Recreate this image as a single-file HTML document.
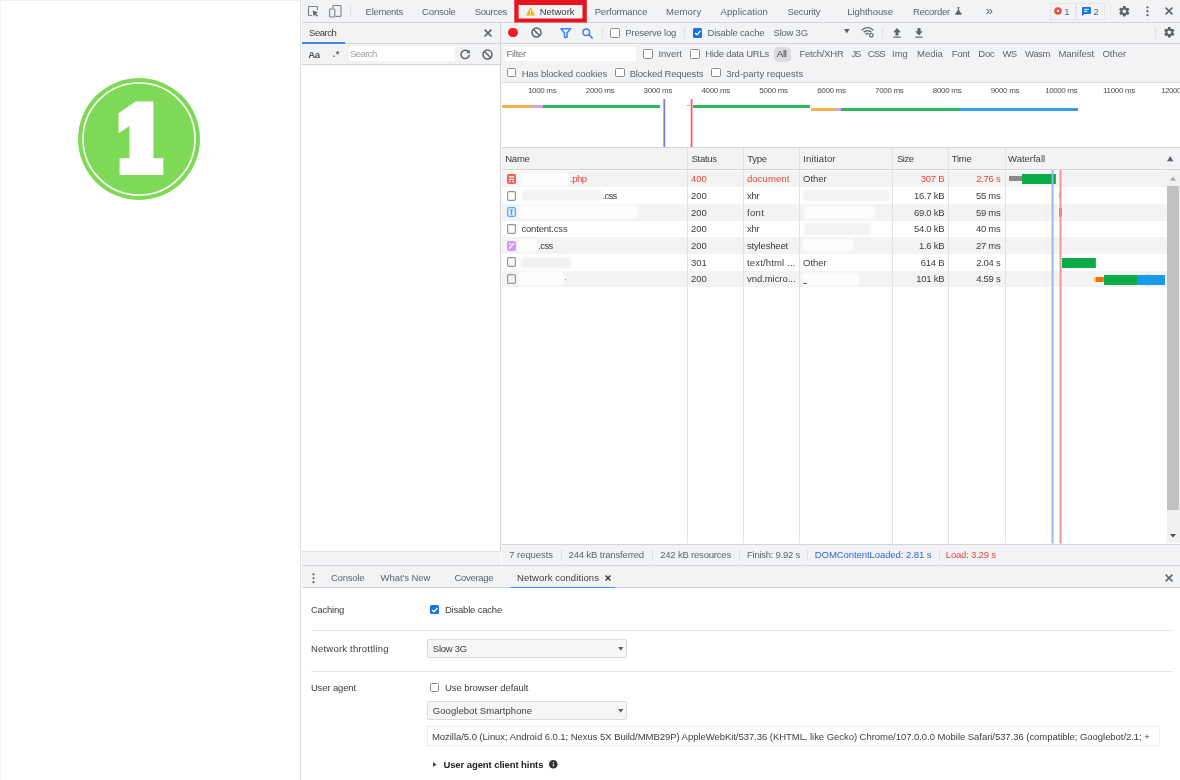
<!DOCTYPE html>
<html lang="en"><head><meta charset="utf-8"><title>DevTools Network conditions</title>
<style>
html,body{margin:0;padding:0;}
body{width:1180px;height:780px;overflow:hidden;background:#fff;position:relative;font-family:"Liberation Sans",sans-serif;font-size:9.5px;color:#333;}
.t{position:absolute;white-space:pre;line-height:14px;height:14px;}
.cb{position:absolute;width:7.5px;height:7.5px;border:1px solid #8c8c8c;border-radius:1.5px;background:#fff;}
.cbc{position:absolute;width:9.5px;height:9.5px;border-radius:1.5px;background:#1a73e8;}
svg{position:absolute;overflow:visible;}
#app{position:absolute;left:0;top:0;width:1180px;height:780px;will-change:transform;}
</style></head><body>
<div id="app">
<svg style="left:70px;top:70px" width="140" height="140" viewBox="70 70 140 140">
<circle cx="139" cy="139" r="61" fill="#7ed957"/>
<circle cx="139" cy="139" r="56" fill="none" stroke="#fff" stroke-width="1.6"/>
<text x="140" y="169.4" text-anchor="middle" font-family="'DejaVu Serif','Liberation Serif',serif" font-weight="bold" font-size="82" fill="#fff" stroke="#fff" stroke-width="12" stroke-linejoin="miter" transform="translate(140 0) scale(0.88 1) translate(-140 0)">1</text>
</svg>
<div style="position:absolute;left:0px;top:0px;width:300px;height:1px;background:#efeff2;"></div>
<div style="position:absolute;left:0px;top:0px;width:1px;height:780px;background:#f4f4f6;"></div>
<div style="position:absolute;left:300.3px;top:0px;width:1.2px;height:780px;background:#dcdee0;"></div>
<div style="position:absolute;left:301.5px;top:0px;width:878.5px;height:21.5px;background:#f1f3f4;"></div>
<div style="position:absolute;left:301.5px;top:21.5px;width:878.5px;height:1px;background:#d3d5d8;"></div>
<div style="position:absolute;left:301.5px;top:22.5px;width:878.5px;height:20.5px;background:#f1f3f4;"></div>
<div style="position:absolute;left:301.5px;top:43px;width:878.5px;height:1px;background:#d3d5d8;"></div>
<div style="position:absolute;left:301.5px;top:44px;width:199.5px;height:20.3px;background:#f1f3f4;"></div>
<div style="position:absolute;left:501px;top:44px;width:679px;height:21px;background:#f1f3f4;"></div>
<div style="position:absolute;left:301.5px;top:64.3px;width:199.5px;height:1px;background:#d3d5d8;"></div>
<div style="position:absolute;left:501.5px;top:65px;width:678.5px;height:17.5px;background:#f1f3f4;"></div>
<div style="position:absolute;left:501.5px;top:82px;width:678.5px;height:1px;background:#dddee1;"></div>
<div style="position:absolute;left:500.2px;top:22.5px;width:1.3px;height:543px;background:#cfd1d4;"></div>
<svg style="left:308px;top:6px" width="11" height="11" viewBox="0 0 11 11"><path d="M9.5 4V1.2a.7.7 0 0 0-.7-.7H1.2a.7.7 0 0 0-.7.7v7.6c0 .4.3.7.7.7H4" fill="none" stroke="#7d8288" stroke-width="1.1"/><path d="M4.6 4.4l5.6 2.2-2.4.9 2.1 2.3-1 .9-2.100-2.300-1.100 2.300z" fill="#5f6368"/></svg>
<svg style="left:329px;top:5px" width="13" height="13" viewBox="0 0 13 13"><path d="M4 3V1.300a.8.800 0 0 1 .8-.8h6.400a.8.800 0 0 1 .8.800V11" fill="none" stroke="#7d8288" stroke-width="1.1"/><rect x="0.600" y="4" width="5.200" height="8" rx=".8" fill="none" stroke="#7d8288" stroke-width="1.1"/><path d="M6.500 11.400H12" stroke="#7d8288" stroke-width="1.1"/></svg>
<div style="position:absolute;left:350.3px;top:5px;width:1px;height:12px;background:#dfe0e3;"></div>
<span class="t" style="left:365.60px;top:4.70px;font-size:9.5px;letter-spacing:-0.289px;color:#60646a;">Elements</span>
<span class="t" style="left:422.10px;top:4.70px;font-size:9.5px;letter-spacing:-0.180px;color:#60646a;">Console</span>
<span class="t" style="left:474.70px;top:4.70px;font-size:9.5px;letter-spacing:-0.366px;color:#60646a;">Sources</span>
<svg style="left:0;top:0" width="1180" height="30"><path fill-rule="evenodd" fill="#e8131f" d="M514.300 -1H586.800V22.600H514.300zM518.600 4.900V18.500H582.500V4.900z"/></svg>
<svg style="left:526px;top:6.800px" width="9" height="8.500" viewBox="0 0 9 8.500"><path d="M4.500 0L9 8.500H0z" fill="#f4b400"/><rect x="4" y="3" width="1" height="3" fill="#fff"/><rect x="4" y="6.700" width="1" height="1" fill="#fff"/></svg>
<span class="t" style="left:539.70px;top:4.70px;font-size:9.5px;letter-spacing:0.008px;color:#3c3c3c;">Network</span>
<span class="t" style="left:594.70px;top:4.70px;font-size:9.5px;letter-spacing:-0.163px;color:#60646a;">Performance</span>
<span class="t" style="left:666.00px;top:4.70px;font-size:9.5px;letter-spacing:0.165px;color:#60646a;">Memory</span>
<span class="t" style="left:720.50px;top:4.70px;font-size:9.5px;letter-spacing:0.092px;color:#60646a;">Application</span>
<span class="t" style="left:787.60px;top:4.70px;font-size:9.5px;letter-spacing:-0.216px;color:#60646a;">Security</span>
<span class="t" style="left:847.30px;top:4.70px;font-size:9.5px;letter-spacing:-0.078px;color:#60646a;">Lighthouse</span>
<span class="t" style="left:913.00px;top:4.70px;font-size:9.5px;letter-spacing:-0.285px;color:#60646a;">Recorder</span>
<svg style="left:954.800px;top:7px" width="6.900" height="7.700" viewBox="0 0 8 7.500" preserveAspectRatio="none"><path d="M2.800 0h2.400v.8h-.5v2.400L7.600 6.700a.5.500 0 0 1-.4.800H.800a.5.500 0 0 1-.4-.8L3.300 3.200V.800h-.5z" fill="#5f6368"/></svg>
<span class="t" style="left:985.80px;top:3.60px;font-size:13px;letter-spacing:-0.034px;color:#60646a;">»</span>
<div style="position:absolute;left:1049.700px;top:3px;width:26.400px;height:16.500px;border:1px dotted #d6d8db;box-sizing:border-box;"></div>
<div style="position:absolute;left:1075.600px;top:3px;width:29.400px;height:16.500px;border:1px dotted #d6d8db;box-sizing:border-box;"></div>
<svg style="left:1053.800px;top:7px" width="8" height="8" viewBox="0 0 8 8"><circle cx="4" cy="4" r="3.800" fill="#e7514a"/><path d="M3 3l2 2M5 3L3 5" stroke="#fff" stroke-width="1"/></svg>
<span class="t" style="left:1064.20px;top:4.70px;font-size:9.5px;letter-spacing:-1.297px;color:#60646a;">1</span>
<svg style="left:1081.500px;top:6.800px" width="9" height="9" viewBox="0 0 9 9"><path d="M.8 0h7.400a.8.800 0 0 1 .8.800v5.400a.8.800 0 0 1-.8.800H2.500L0 9V.800A.8.800 0 0 1 .8 0z" fill="#1a73e8"/><path d="M2 2.300h5M2 4.300h3.500" stroke="#fff" stroke-width=".9"/></svg>
<span class="t" style="left:1093.60px;top:4.70px;font-size:9.5px;letter-spacing:-0.497px;color:#60646a;">2</span>
<div style="position:absolute;left:1110px;top:5px;width:1px;height:12px;background:#eaebed;"></div>
<svg style="left:1118.2px;top:4.7px" width="12.600" height="12.600" viewBox="0 0 24 24"><path d="M19.430 12.980c.040-.320.070-.640.070-.980s-.030-.660-.070-.980l2.110-1.650c.190-.150.240-.420.120-.640l-2-3.460c-.120-.220-.390-.300-.610-.220l-2.490 1c-.520-.400-1.080-.730-1.690-.980l-.380-2.650C14.460 2.180 14.250 2 14 2h-4c-.250 0-.460.180-.490.420l-.380 2.650c-.610.250-1.170.590-1.690.980l-2.490-1c-.230-.090-.490 0-.610.220l-2 3.460c-.130.220-.070.490.120.640l2.110 1.650c-.040.320-.070.650-.070.980s.030.660.070.980l-2.110 1.650c-.190.150-.240.420-.120.640l2 3.460c.120.220.390.300.610.220l2.490-1c.520.400 1.080.730 1.690.980l.380 2.650c.030.240.240.420.490.420h4c.250 0 .460-.180.490-.420l.380-2.650c.610-.250 1.170-.590 1.690-.980l2.490 1c.230.090.490 0 .610-.220l2-3.460c.120-.220.070-.490-.120-.640l-2.110-1.650zM12 15.500c-1.930 0-3.500-1.570-3.500-3.500s1.570-3.500 3.500-3.500 3.500 1.570 3.500 3.500-1.570 3.500-3.500 3.500z" fill="#5f6368"/></svg>
<svg style="left:1145.800px;top:6.200px" width="3" height="10.500" viewBox="0 0 3 10.500"><circle cx="1.500" cy="1.300" r="1.150" fill="#5f6368"/><circle cx="1.500" cy="5.250" r="1.150" fill="#5f6368"/><circle cx="1.500" cy="9.200" r="1.150" fill="#5f6368"/></svg>
<svg style="left:1164.8px;top:7.2px" width="8" height="8" viewBox="0 0 8 8"><path d="M.6.600l6.800 6.800M7.400.600L.600 7.400" stroke="#5f6368" stroke-width="1.500"/></svg>
<span class="t" style="left:309.00px;top:26.00px;font-size:9.5px;letter-spacing:-0.452px;color:#3c3c3c;">Search</span>
<div style="position:absolute;left:301.5px;top:42px;width:43.5px;height:1.8px;background:#4a86e8;"></div>
<svg style="left:483.5px;top:29.2px" width="8" height="8" viewBox="0 0 8 8"><path d="M.6.600l6.800 6.800M7.400.600L.600 7.400" stroke="#5f6368" stroke-width="1.500"/></svg>
<div style="position:absolute;left:507.900px;top:27.600px;width:9.800px;height:9.800px;border-radius:50%;background:#ee1c25;"></div>
<svg style="left:530.6px;top:27.1px" width="11" height="11" viewBox="0 0 11 11"><circle cx="5.500" cy="5.500" r="4.500" fill="none" stroke="#5f6368" stroke-width="1.500"/><path d="M2.300 2.300l6.400 6.400" stroke="#5f6368" stroke-width="1.500"/></svg>
<svg style="left:559.500px;top:28.100px" width="11.500" height="10" viewBox="0 0 11.500 10"><path d="M.9.800h9.700L7 5v4.200H4.500V5z" fill="none" stroke="#3b82f0" stroke-width="1.500" stroke-linejoin="round"/></svg>
<svg style="left:581.500px;top:28.100px" width="11.500" height="11" viewBox="0 0 11.500 11"><circle cx="4.300" cy="4.300" r="3.300" fill="none" stroke="#3b82f0" stroke-width="1.500"/><path d="M6.700 6.700l4 3.800" stroke="#3b82f0" stroke-width="1.700"/></svg>
<div style="position:absolute;left:602.3px;top:27px;width:1px;height:12px;background:#dfe0e3;"></div>
<div class="cb" style="left:610.25px;top:28.25px"></div>
<span class="t" style="left:625.30px;top:26.00px;font-size:9.5px;letter-spacing:-0.204px;color:#60646a;">Preserve log</span>
<div style="position:absolute;left:684px;top:27px;width:1px;height:12px;background:#dfe0e3;"></div>
<div class="cbc" style="left:692.55px;top:28.25px"></div>
<svg style="left:692.55px;top:28.25px" width="9.500" height="9.500" viewBox="0 0 9.500 9.500"><path d="M2.100 4.900l1.900 1.900 3.500-3.900" fill="none" stroke="#fff" stroke-width="1.400"/></svg>
<span class="t" style="left:707.50px;top:26.00px;font-size:9.5px;letter-spacing:-0.221px;color:#60646a;">Disable cache</span>
<span class="t" style="left:773.60px;top:26.00px;font-size:9.5px;letter-spacing:-0.244px;color:#60646a;">Slow 3G</span>
<svg style="left:844px;top:29.200px" width="5.600" height="4.500" viewBox="0 0 5 4.500" preserveAspectRatio="none"><path d="M0 0h5L2.500 4.500z" fill="#5f6368"/></svg>
<svg style="left:861px;top:26.700px" width="13.500" height="10.500" viewBox="0 0 13.500 10.500"><path d="M.7 3.200a8 8 0 0 1 11.600 0M2.600 5.300a5.300 5.300 0 0 1 7.800 0M4.500 7.300a2.700 2.700 0 0 1 3 -.5" fill="none" stroke="#5f6368" stroke-width="1.300"/><circle cx="10.300" cy="8.300" r="1.800" fill="none" stroke="#5f6368" stroke-width="1.200"/></svg>
<div style="position:absolute;left:881.5px;top:27px;width:1px;height:12px;background:#dfe0e3;"></div>
<svg style="left:892.800px;top:27.600px" width="8" height="9.800" viewBox="0 0 8 10.500" preserveAspectRatio="none"><path d="M4 0L7.800 4.500H5.500V8H2.500V4.500H.2z" fill="#5f6368"/><rect x=".2" y="9.200" width="7.600" height="1.200" fill="#5f6368"/></svg>
<svg style="left:914.800px;top:27.600px" width="8" height="9.800" viewBox="0 0 8 10.500" preserveAspectRatio="none"><path d="M4 8L7.800 3.500H5.500V0H2.500V3.500H.2z" fill="#5f6368"/><rect x=".2" y="9.200" width="7.600" height="1.200" fill="#5f6368"/></svg>
<div style="position:absolute;left:1155px;top:27px;width:1px;height:12px;background:#dfe0e3;"></div>
<svg style="left:1162.5px;top:26.4px" width="12.600" height="12.600" viewBox="0 0 24 24"><path d="M19.430 12.980c.040-.320.070-.640.070-.980s-.030-.660-.070-.980l2.110-1.650c.190-.150.240-.420.120-.640l-2-3.460c-.120-.220-.390-.300-.610-.220l-2.490 1c-.520-.400-1.080-.730-1.690-.980l-.380-2.650C14.460 2.180 14.250 2 14 2h-4c-.250 0-.460.180-.490.420l-.380 2.650c-.610.250-1.170.590-1.690.980l-2.490-1c-.230-.090-.490 0-.610.220l-2 3.460c-.130.220-.070.490.120.640l2.110 1.650c-.040.320-.070.650-.070.980s.030.660.070.980l-2.110 1.650c-.190.150-.240.420-.120.640l2 3.460c.120.220.390.300.610.220l2.490-1c.520.400 1.080.730 1.690.980l.380 2.650c.030.240.240.420.490.420h4c.250 0 .460-.180.490-.420l.380-2.650c.610-.250 1.170-.590 1.690-.980l2.490 1c.230.090.490 0 .610-.220l2-3.460c.120-.220.070-.490-.120-.640l-2.110-1.650zM12 15.500c-1.930 0-3.500-1.570-3.500-3.500s1.570-3.500 3.500-3.500 3.500 1.570 3.500 3.500-1.570 3.500-3.500 3.500z" fill="#5f6368"/></svg>
<span class="t" style="left:308.20px;top:48.00px;font-size:9.5px;letter-spacing:-0.278px;color:#4a4d51;font-weight:700;">Aa</span>
<span class="t" style="left:332.60px;top:47.00px;font-size:9.5px;letter-spacing:0.528px;color:#5f6368;font-weight:700;">.*</span>
<div style="position:absolute;left:348.8px;top:46.1px;width:106.3px;height:15px;background:#fff;"></div>
<span class="t" style="left:350.00px;top:47.30px;font-size:9.5px;letter-spacing:-0.552px;color:#9aa0a6;">Search</span>
<svg style="left:459.800px;top:49px" width="10.500" height="10.500" viewBox="0 0 10.500 10.500"><path d="M8.700 3A4.200 4.200 0 1 0 9.400 5.800" fill="none" stroke="#5f6368" stroke-width="1.500"/><path d="M9.800.800V4.200H6.400z" fill="#5f6368"/></svg>
<svg style="left:482.2px;top:48.7px" width="11" height="11" viewBox="0 0 11 11"><circle cx="5.500" cy="5.500" r="4.500" fill="none" stroke="#5f6368" stroke-width="1.500"/><path d="M2.300 2.300l6.400 6.400" stroke="#5f6368" stroke-width="1.500"/></svg>
<div style="position:absolute;left:505px;top:46.5px;width:130.5px;height:14.5px;background:#fff;"></div>
<span class="t" style="left:506.50px;top:47.30px;font-size:9.5px;letter-spacing:-0.271px;color:#70757a;">Filter</span>
<div class="cb" style="left:643.45px;top:49.25px"></div>
<span class="t" style="left:658.50px;top:47.30px;font-size:9.5px;letter-spacing:-0.078px;color:#60646a;">Invert</span>
<div class="cb" style="left:690.45px;top:49.25px"></div>
<span class="t" style="left:705.20px;top:47.30px;font-size:9.5px;letter-spacing:-0.233px;color:#60646a;">Hide data URLs</span>
<div style="position:absolute;left:774px;top:46.600px;width:17.300px;height:15px;border-radius:5px;background:#dadce0;"></div>
<span class="t" style="left:776.80px;top:47.30px;font-size:9.5px;letter-spacing:-0.221px;color:#3c3c3c;">All</span>
<span class="t" style="left:799.40px;top:47.30px;font-size:9.5px;letter-spacing:-0.263px;color:#60646a;">Fetch/XHR</span>
<span class="t" style="left:851.40px;top:47.30px;font-size:9.5px;letter-spacing:-1.247px;color:#60646a;">JS</span>
<span class="t" style="left:867.80px;top:47.30px;font-size:9.5px;letter-spacing:-0.916px;color:#60646a;">CSS</span>
<span class="t" style="left:892.00px;top:47.30px;font-size:9.5px;letter-spacing:0.019px;color:#60646a;">Img</span>
<span class="t" style="left:917.00px;top:47.30px;font-size:9.5px;letter-spacing:-0.035px;color:#60646a;">Media</span>
<span class="t" style="left:951.70px;top:47.30px;font-size:9.5px;letter-spacing:-0.304px;color:#60646a;">Font</span>
<span class="t" style="left:978.30px;top:47.30px;font-size:9.5px;letter-spacing:-0.269px;color:#60646a;">Doc</span>
<span class="t" style="left:1002.50px;top:47.30px;font-size:9.5px;letter-spacing:-0.756px;color:#60646a;">WS</span>
<span class="t" style="left:1025.00px;top:47.30px;font-size:9.5px;letter-spacing:-0.391px;color:#60646a;">Wasm</span>
<span class="t" style="left:1058.50px;top:47.30px;font-size:9.5px;letter-spacing:-0.051px;color:#60646a;">Manifest</span>
<span class="t" style="left:1102.40px;top:47.30px;font-size:9.5px;letter-spacing:0.007px;color:#60646a;">Other</span>
<div class="cb" style="left:506.75px;top:67.95px"></div>
<span class="t" style="left:521.80px;top:66.60px;font-size:9.5px;letter-spacing:-0.092px;color:#60646a;">Has blocked cookies</span>
<div class="cb" style="left:615.45px;top:67.95px"></div>
<span class="t" style="left:629.70px;top:66.60px;font-size:9.5px;letter-spacing:-0.192px;color:#60646a;">Blocked Requests</span>
<div class="cb" style="left:711.45px;top:67.95px"></div>
<span class="t" style="left:726.20px;top:66.60px;font-size:9.5px;letter-spacing:-0.005px;color:#60646a;">3rd-party requests</span>
<span class="t" style="left:527.90px;top:84.00px;font-size:8.0px;letter-spacing:-0.312px;color:#4a4d50;">1000 ms</span>
<span class="t" style="left:585.75px;top:84.00px;font-size:8.0px;letter-spacing:-0.312px;color:#4a4d50;">2000 ms</span>
<span class="t" style="left:643.60px;top:84.00px;font-size:8.0px;letter-spacing:-0.312px;color:#4a4d50;">3000 ms</span>
<span class="t" style="left:701.45px;top:84.00px;font-size:8.0px;letter-spacing:-0.312px;color:#4a4d50;">4000 ms</span>
<span class="t" style="left:759.30px;top:84.00px;font-size:8.0px;letter-spacing:-0.312px;color:#4a4d50;">5000 ms</span>
<span class="t" style="left:817.15px;top:84.00px;font-size:8.0px;letter-spacing:-0.312px;color:#4a4d50;">6000 ms</span>
<span class="t" style="left:875.00px;top:84.00px;font-size:8.0px;letter-spacing:-0.312px;color:#4a4d50;">7000 ms</span>
<span class="t" style="left:932.85px;top:84.00px;font-size:8.0px;letter-spacing:-0.312px;color:#4a4d50;">8000 ms</span>
<span class="t" style="left:990.70px;top:84.00px;font-size:8.0px;letter-spacing:-0.312px;color:#4a4d50;">9000 ms</span>
<span class="t" style="left:1045.25px;top:84.00px;font-size:8.0px;letter-spacing:-0.418px;color:#4a4d50;">10000 ms</span>
<span class="t" style="left:1103.10px;top:84.00px;font-size:8.0px;letter-spacing:-0.343px;color:#4a4d50;">11000 ms</span>
<span class="t" style="left:1160.95px;top:84.00px;font-size:8.0px;letter-spacing:-0.418px;color:#4a4d50;">12000 ms</span>
<div style="position:absolute;left:501.5px;top:105.4px;width:29px;height:2.8px;background:#f2b14a;"></div>
<div style="position:absolute;left:530.5px;top:105.4px;width:12.8px;height:2.8px;background:#d7a0e8;"></div>
<div style="position:absolute;left:543.3px;top:105.4px;width:116.7px;height:2.8px;background:#2fb55d;"></div>
<svg style="left:0;top:0" width="1180" height="780"><rect x="663.4" y="99" width="1.8" height="48.4" fill="#7b7fd8" opacity="1"/></svg>
<svg style="left:0;top:0" width="1180" height="780"><rect x="690.7" y="99" width="1.8" height="48.4" fill="#e6666a" opacity="1"/></svg>
<div style="position:absolute;left:687px;top:105px;width:3px;height:1px;background:#c9a6a6;"></div>
<div style="position:absolute;left:692.5px;top:105.4px;width:117.5px;height:2.8px;background:#2fb55d;"></div>
<div style="position:absolute;left:810.5px;top:108.2px;width:24.5px;height:2.6px;background:#f2b14a;"></div>
<div style="position:absolute;left:835px;top:108.2px;width:6px;height:2.6px;background:#d7a0e8;"></div>
<div style="position:absolute;left:841px;top:108.2px;width:119px;height:2.6px;background:#2fb55d;"></div>
<div style="position:absolute;left:960px;top:108.2px;width:117.5px;height:2.6px;background:#3a9be8;"></div>
<svg style="left:0;top:0" width="1180" height="780"><rect x="501.5" y="147.1" width="678.5" height="1.5" fill="#d0d2d5" opacity="1"/></svg>
<div style="position:absolute;left:501.5px;top:148.4px;width:678.5px;height:20.4px;background:#f1f3f4;"></div>
<div style="position:absolute;left:501.5px;top:168.8px;width:678.5px;height:1px;background:#d3d5d8;"></div>
<span class="t" style="left:505.20px;top:152.00px;font-size:9.5px;letter-spacing:-0.211px;color:#3c3c3c;">Name</span>
<span class="t" style="left:691.60px;top:152.00px;font-size:9.5px;letter-spacing:-0.306px;color:#3c3c3c;">Status</span>
<span class="t" style="left:747.30px;top:152.00px;font-size:9.5px;letter-spacing:-0.327px;color:#3c3c3c;">Type</span>
<span class="t" style="left:803.20px;top:152.00px;font-size:9.5px;letter-spacing:0.149px;color:#3c3c3c;">Initiator</span>
<span class="t" style="left:897.00px;top:152.00px;font-size:9.5px;letter-spacing:-0.496px;color:#3c3c3c;">Size</span>
<span class="t" style="left:951.80px;top:152.00px;font-size:9.5px;letter-spacing:-0.266px;color:#3c3c3c;">Time</span>
<span class="t" style="left:1008.10px;top:152.00px;font-size:9.5px;letter-spacing:-0.016px;color:#3c3c3c;">Waterfall</span>
<svg style="left:1166.800px;top:156.400px" width="6.400" height="5.200" viewBox="0 0 6.400 4.500" preserveAspectRatio="none"><path d="M0 4.500h6.400L3.200 0z" fill="#5f6368"/></svg>
<div style="position:absolute;left:501.5px;top:170.5px;width:665px;height:16.7px;background:#f3f3f3;"></div>
<div style="position:absolute;left:501.5px;top:203.9px;width:665px;height:16.7px;background:#f3f3f3;"></div>
<div style="position:absolute;left:501.5px;top:237.3px;width:665px;height:16.7px;background:#f3f3f3;"></div>
<div style="position:absolute;left:501.5px;top:270.7px;width:665px;height:16.7px;background:#f3f3f3;"></div>
<div style="position:absolute;left:687.4px;top:148.4px;width:1px;height:395px;background:#e1e2e4;"></div>
<div style="position:absolute;left:743.3px;top:148.4px;width:1px;height:395px;background:#e1e2e4;"></div>
<div style="position:absolute;left:799.4px;top:148.4px;width:1px;height:395px;background:#e1e2e4;"></div>
<div style="position:absolute;left:892.4px;top:148.4px;width:1px;height:395px;background:#e1e2e4;"></div>
<div style="position:absolute;left:948.1px;top:148.4px;width:1px;height:395px;background:#e1e2e4;"></div>
<div style="position:absolute;left:1004.6px;top:148.4px;width:1px;height:395px;background:#e1e2e4;"></div>
<svg style="left:507px;top:173.80px" width="9" height="10" viewBox="0 0 9 10.400" preserveAspectRatio="none"><rect x=".6" y=".6" width="7.800" height="9.200" rx="1.300" fill="#ea5f58" stroke="#ea5f58" stroke-width="1.200"/><rect x="1.800" y="2.300" width="5.400" height="1.300" fill="#fff"/><rect x="1.800" y="5" width="5.400" height="1.300" fill="#fff"/><rect x="1.800" y="7.400" width="2" height="1.200" fill="#fff"/><rect x="5.200" y="7.400" width="2" height="1.200" fill="#fff"/></svg>
<svg style="left:507px;top:190.50px" width="9" height="10" viewBox="0 0 9 10.400" preserveAspectRatio="none"><rect x=".6" y=".6" width="7.800" height="9.200" rx="1.300" fill="none" stroke="#92979c" stroke-width="1.200"/></svg>
<svg style="left:507px;top:207.20px" width="9" height="10" viewBox="0 0 9 10.400" preserveAspectRatio="none"><rect x=".6" y=".6" width="7.800" height="9.200" rx="1.300" fill="#d9eefc" stroke="#5ab0ee" stroke-width="1.200"/><path d="M3 3.300h3M4.500 3.300v4.200M3.800 7.500h1.500" stroke="#2f9be8" stroke-width="1" fill="none"/></svg>
<svg style="left:507px;top:223.90px" width="9" height="10" viewBox="0 0 9 10.400" preserveAspectRatio="none"><rect x=".6" y=".6" width="7.800" height="9.200" rx="1.300" fill="none" stroke="#92979c" stroke-width="1.200"/></svg>
<svg style="left:507px;top:240.60px" width="9" height="10" viewBox="0 0 9 10.400" preserveAspectRatio="none"><rect x=".6" y=".6" width="7.800" height="9.200" rx="1.300" fill="#cf9af3" stroke="#cf9af3" stroke-width="1.200"/><path d="M2 8L7 2.500" stroke="#fff" stroke-width="1.300"/><path d="M2 3h2.500" stroke="#fff" stroke-width="1"/></svg>
<svg style="left:507px;top:257.30px" width="9" height="10" viewBox="0 0 9 10.400" preserveAspectRatio="none"><rect x=".6" y=".6" width="7.800" height="9.200" rx="1.300" fill="none" stroke="#92979c" stroke-width="1.200"/></svg>
<svg style="left:507px;top:274.00px" width="9" height="10" viewBox="0 0 9 10.400" preserveAspectRatio="none"><rect x=".6" y=".6" width="7.800" height="9.200" rx="1.300" fill="none" stroke="#92979c" stroke-width="1.200"/></svg>
<div style="position:absolute;left:518.6px;top:172.0px;width:50.5px;height:13.7px;background:#fdfdfd;border-radius:3px;filter:blur(0.8px);"></div>
<span class="t" style="left:570.00px;top:172.15px;font-size:9.5px;letter-spacing:-0.450px;color:#e8453c;">.php</span>
<div style="position:absolute;left:522px;top:189.7px;width:79.5px;height:11.7px;background:#f2f2f2;border-radius:3px;filter:blur(0.8px);"></div>
<span class="t" style="left:602.50px;top:188.85px;font-size:9.5px;letter-spacing:-0.723px;color:#3c3c3c;">.css</span>
<div style="position:absolute;left:518.6px;top:205.4px;width:119.5px;height:13.7px;background:#fdfdfd;border-radius:3px;filter:blur(0.8px);"></div>
<span class="t" style="left:521.40px;top:222.25px;font-size:9.5px;letter-spacing:-0.178px;color:#3c3c3c;">content.css</span>
<div style="position:absolute;left:518.6px;top:238.8px;width:18.7px;height:13.7px;background:#fdfdfd;border-radius:3px;filter:blur(0.8px);"></div>
<span class="t" style="left:538.20px;top:238.95px;font-size:9.5px;letter-spacing:-0.573px;color:#3c3c3c;">.css</span>
<div style="position:absolute;left:520.5px;top:256.5px;width:50.3px;height:11.7px;background:#f0f0f0;border-radius:3px;filter:blur(0.8px);"></div>
<div style="position:absolute;left:518.6px;top:272.2px;width:45.7px;height:13.7px;background:#fdfdfd;border-radius:3px;filter:blur(0.8px);"></div>
<div style="position:absolute;left:565px;top:278.7px;width:1.2px;height:1.2px;background:#999;"></div>
<span class="t" style="left:691.00px;top:172.15px;font-size:9.5px;letter-spacing:-0.086px;color:#e8453c;">400</span>
<span class="t" style="left:747.00px;top:172.15px;font-size:9.5px;letter-spacing:0.083px;color:#e8453c;">document</span>
<span class="t" style="left:920.80px;top:172.15px;font-size:9.5px;letter-spacing:-0.285px;color:#e8453c;">307 B</span>
<span class="t" style="left:976.22px;top:172.15px;font-size:9.5px;letter-spacing:-0.285px;color:#e8453c;">2.76 s</span>
<span class="t" style="left:691.00px;top:188.85px;font-size:9.5px;letter-spacing:-0.086px;color:#3c3c3c;">200</span>
<span class="t" style="left:747.00px;top:188.85px;font-size:9.5px;letter-spacing:-0.234px;color:#3c3c3c;">xhr</span>
<span class="t" style="left:913.98px;top:188.85px;font-size:9.5px;letter-spacing:-0.285px;color:#3c3c3c;">16.7 kB</span>
<span class="t" style="left:975.95px;top:188.85px;font-size:9.5px;letter-spacing:-0.285px;color:#3c3c3c;">55 ms</span>
<span class="t" style="left:691.00px;top:205.55px;font-size:9.5px;letter-spacing:-0.086px;color:#3c3c3c;">200</span>
<span class="t" style="left:747.00px;top:205.55px;font-size:9.5px;letter-spacing:0.335px;color:#3c3c3c;">font</span>
<span class="t" style="left:913.98px;top:205.55px;font-size:9.5px;letter-spacing:-0.285px;color:#3c3c3c;">69.0 kB</span>
<span class="t" style="left:975.95px;top:205.55px;font-size:9.5px;letter-spacing:-0.285px;color:#3c3c3c;">59 ms</span>
<span class="t" style="left:691.00px;top:222.25px;font-size:9.5px;letter-spacing:-0.086px;color:#3c3c3c;">200</span>
<span class="t" style="left:747.00px;top:222.25px;font-size:9.5px;letter-spacing:-0.234px;color:#3c3c3c;">xhr</span>
<span class="t" style="left:913.98px;top:222.25px;font-size:9.5px;letter-spacing:-0.285px;color:#3c3c3c;">54.0 kB</span>
<span class="t" style="left:975.95px;top:222.25px;font-size:9.5px;letter-spacing:-0.285px;color:#3c3c3c;">40 ms</span>
<span class="t" style="left:691.00px;top:238.95px;font-size:9.5px;letter-spacing:-0.086px;color:#3c3c3c;">200</span>
<span class="t" style="left:747.00px;top:238.95px;font-size:9.5px;letter-spacing:-0.178px;color:#3c3c3c;">stylesheet</span>
<span class="t" style="left:918.97px;top:238.95px;font-size:9.5px;letter-spacing:-0.285px;color:#3c3c3c;">1.6 kB</span>
<span class="t" style="left:975.95px;top:238.95px;font-size:9.5px;letter-spacing:-0.285px;color:#3c3c3c;">27 ms</span>
<span class="t" style="left:691.00px;top:255.65px;font-size:9.5px;letter-spacing:-0.086px;color:#3c3c3c;">301</span>
<span class="t" style="left:747.00px;top:255.65px;font-size:9.5px;letter-spacing:0.156px;color:#3c3c3c;">text/html ...</span>
<span class="t" style="left:920.80px;top:255.65px;font-size:9.5px;letter-spacing:-0.285px;color:#3c3c3c;">614 B</span>
<span class="t" style="left:976.22px;top:255.65px;font-size:9.5px;letter-spacing:-0.285px;color:#3c3c3c;">2.04 s</span>
<span class="t" style="left:691.00px;top:272.35px;font-size:9.5px;letter-spacing:-0.086px;color:#3c3c3c;">200</span>
<span class="t" style="left:747.00px;top:272.35px;font-size:9.5px;letter-spacing:-0.051px;color:#3c3c3c;">vnd.micro...</span>
<span class="t" style="left:916.33px;top:272.35px;font-size:9.5px;letter-spacing:-0.285px;color:#3c3c3c;">101 kB</span>
<span class="t" style="left:976.22px;top:272.35px;font-size:9.5px;letter-spacing:-0.285px;color:#3c3c3c;">4.59 s</span>
<span class="t" style="left:803.00px;top:172.15px;font-size:9.5px;letter-spacing:0.007px;color:#3c3c3c;">Other</span>
<span class="t" style="left:803.00px;top:255.65px;font-size:9.5px;letter-spacing:0.007px;color:#3c3c3c;">Other</span>
<div style="position:absolute;left:803px;top:189.7px;width:86.6px;height:11.7px;background:#f2f2f2;border-radius:3px;filter:blur(0.8px);"></div>
<div style="position:absolute;left:804px;top:205.9px;width:70.7px;height:12.7px;background:#fdfdfd;border-radius:3px;filter:blur(0.8px);"></div>
<div style="position:absolute;left:804px;top:223.1px;width:67px;height:11.7px;background:#f2f2f2;border-radius:3px;filter:blur(0.8px);"></div>
<div style="position:absolute;left:803px;top:239.3px;width:50px;height:12.7px;background:#fdfdfd;border-radius:3px;filter:blur(0.8px);"></div>
<div style="position:absolute;left:802px;top:272.7px;width:57px;height:12.7px;background:#fdfdfd;border-radius:3px;filter:blur(0.8px);"></div>
<div style="position:absolute;left:803.3px;top:283.2px;width:3.4px;height:1px;background:#666;"></div>
<div style="position:absolute;left:1008.7px;top:176.3px;width:13.7px;height:5px;background:#8a8a8a;"></div>
<div style="position:absolute;left:1022.4px;top:173.7px;width:32.5px;height:10px;background:#0bab47;"></div>
<div style="position:absolute;left:1054.9px;top:173.7px;width:1.6px;height:10px;background:#2f9be8;"></div>
<div style="position:absolute;left:1059px;top:193px;width:1px;height:5px;background:#b0b0b0;"></div>
<div style="position:absolute;left:1058.6px;top:208px;width:3px;height:9px;background:#8a8a8a;border-radius:1px;"></div>
<div style="position:absolute;left:1062px;top:258px;width:32.6px;height:9.8px;background:#0bab47;"></div>
<div style="position:absolute;left:1094.6px;top:258px;width:1.4px;height:9.8px;background:#2f9be8;"></div>
<div style="position:absolute;left:1093.5px;top:276.7px;width:2.7px;height:5.7px;background:#f5c26b;"></div>
<div style="position:absolute;left:1096.2px;top:276.7px;width:6.5px;height:5.7px;background:#e8710a;"></div>
<div style="position:absolute;left:1102.7px;top:276.7px;width:1.6px;height:5.7px;background:#c58af0;"></div>
<div style="position:absolute;left:1104.3px;top:274.6px;width:33px;height:10.2px;background:#0bab47;"></div>
<div style="position:absolute;left:1137.3px;top:274.6px;width:28px;height:10.2px;background:#1a9be8;"></div>
<svg style="left:0;top:0" width="1180" height="780"><rect x="1051.6" y="170" width="1.9" height="373.5" fill="#8fb8f8" opacity="1"/></svg>
<svg style="left:0;top:0" width="1180" height="780"><rect x="1059.6" y="170" width="1.9" height="373.5" fill="#ef9494" opacity="1"/></svg>
<div style="position:absolute;left:1166.5px;top:169.8px;width:13.5px;height:373.7px;background:#f1f1f1;"></div>
<div style="position:absolute;left:1167px;top:186px;width:12px;height:324px;background:#c1c1c1;"></div>
<svg style="left:1170.400px;top:176.500px" width="6" height="3.500" viewBox="0 0 6 3.500"><path d="M0 3.500h6L3 0z" fill="#a0a0a0"/></svg>
<svg style="left:1170.400px;top:533.800px" width="6" height="3.500" viewBox="0 0 6 3.500"><path d="M0 0h6L3 3.500z" fill="#505050"/></svg>
<div style="position:absolute;left:501.5px;top:543.5px;width:678.5px;height:1px;background:#d3d5d8;"></div>
<div style="position:absolute;left:501.5px;top:544.5px;width:678.5px;height:21px;background:#f1f3f4;"></div>
<span class="t" style="left:509.30px;top:548.20px;font-size:9.5px;letter-spacing:-0.068px;color:#60646a;">7 requests</span>
<span class="t" style="left:568.60px;top:548.20px;font-size:9.5px;letter-spacing:-0.153px;color:#60646a;">244 kB transferred</span>
<span class="t" style="left:660.20px;top:548.20px;font-size:9.5px;letter-spacing:-0.196px;color:#60646a;">242 kB resources</span>
<span class="t" style="left:747.00px;top:548.20px;font-size:9.5px;letter-spacing:-0.250px;color:#60646a;">Finish: 9.92 s</span>
<span class="t" style="left:814.80px;top:548.20px;font-size:9.5px;letter-spacing:-0.071px;color:#3367d6;">DOMContentLoaded: 2.81 s</span>
<span class="t" style="left:945.80px;top:548.20px;font-size:9.5px;letter-spacing:-0.191px;color:#e8453c;">Load: 3.29 s</span>
<div style="position:absolute;left:561.4px;top:549px;width:1px;height:12px;background:#dfe0e3;"></div>
<div style="position:absolute;left:651.7px;top:549px;width:1px;height:12px;background:#dfe0e3;"></div>
<div style="position:absolute;left:739.4px;top:549px;width:1px;height:12px;background:#dfe0e3;"></div>
<div style="position:absolute;left:807px;top:549px;width:1px;height:12px;background:#dfe0e3;"></div>
<div style="position:absolute;left:938.6px;top:549px;width:1px;height:12px;background:#dfe0e3;"></div>
<div style="position:absolute;left:301.5px;top:551.6px;width:199px;height:14px;background:#f1f3f4;"></div>
<div style="position:absolute;left:301.5px;top:551.1px;width:199px;height:1px;background:#e0e2e5;"></div>
<div style="position:absolute;left:301.5px;top:565.4px;width:878.5px;height:1px;background:#d3d5d8;"></div>
<div style="position:absolute;left:301.5px;top:566.4px;width:878.5px;height:21px;background:#f1f3f4;"></div>
<div style="position:absolute;left:301.5px;top:587.4px;width:878.5px;height:1px;background:#d3d5d8;"></div>
<svg style="left:312.300px;top:573px" width="3" height="10.500" viewBox="0 0 3 10.500"><circle cx="1.500" cy="1.300" r="1.100" fill="#5f6368"/><circle cx="1.500" cy="5.250" r="1.100" fill="#5f6368"/><circle cx="1.500" cy="9.200" r="1.100" fill="#5f6368"/></svg>
<span class="t" style="left:331.00px;top:570.80px;font-size:9.5px;letter-spacing:-0.237px;color:#60646a;">Console</span>
<span class="t" style="left:380.60px;top:570.80px;font-size:9.5px;letter-spacing:-0.059px;color:#60646a;">What&#x27;s New</span>
<span class="t" style="left:454.40px;top:570.80px;font-size:9.5px;letter-spacing:-0.288px;color:#60646a;">Coverage</span>
<span class="t" style="left:517.00px;top:570.80px;font-size:9.5px;letter-spacing:0.096px;color:#3c3c3c;">Network conditions</span>
<svg style="left:605px;top:575px" width="6" height="6" viewBox="0 0 6 6"><path d="M.5.500l5 5M5.500.500l-5 5" stroke="#333" stroke-width="1.400"/></svg>
<div style="position:absolute;left:509.7px;top:586.6px;width:105.2px;height:1.8px;background:#4a8df0;"></div>
<svg style="left:1164.8px;top:573.7px" width="8" height="8" viewBox="0 0 8 8"><path d="M.6.600l6.800 6.800M7.400.600L.600 7.400" stroke="#5f6368" stroke-width="1.500"/></svg>
<span class="t" style="left:310.90px;top:603.00px;font-size:9.5px;letter-spacing:-0.251px;color:#3c3c3c;">Caching</span>
<div class="cbc" style="left:429.75px;top:604.75px"></div>
<svg style="left:429.75px;top:604.75px" width="9.500" height="9.500" viewBox="0 0 9.500 9.500"><path d="M2.100 4.900l1.900 1.900 3.500-3.900" fill="none" stroke="#fff" stroke-width="1.400"/></svg>
<span class="t" style="left:444.90px;top:603.00px;font-size:9.5px;letter-spacing:-0.198px;color:#3c3c3c;">Disable cache</span>
<div style="position:absolute;left:310.9px;top:630.3px;width:862px;height:1px;background:#e3e5e8;"></div>
<span class="t" style="left:310.90px;top:642.00px;font-size:9.5px;letter-spacing:0.215px;color:#3c3c3c;">Network throttling</span>
<div style="position:absolute;left:427px;top:639px;width:200px;height:18.700px;box-sizing:border-box;border:1px solid #d8dadd;border-radius:2px;background:#f6f6f6;"></div>
<span class="t" style="left:432.80px;top:642.00px;font-size:9.5px;letter-spacing:-0.244px;color:#3c3c3c;">Slow 3G</span>
<svg style="left:617.500px;top:647px" width="5.500" height="3.800" viewBox="0 0 5.500 3.800"><path d="M0 0h5.500L2.750 3.800z" fill="#666"/></svg>
<div style="position:absolute;left:310.9px;top:670.8px;width:862px;height:1px;background:#e3e5e8;"></div>
<span class="t" style="left:310.90px;top:681.30px;font-size:9.5px;letter-spacing:-0.138px;color:#3c3c3c;">User agent</span>
<div class="cb" style="left:429.75px;top:682.55px"></div>
<span class="t" style="left:444.90px;top:681.30px;font-size:9.5px;letter-spacing:-0.052px;color:#3c3c3c;">Use browser default</span>
<div style="position:absolute;left:427px;top:701px;width:200px;height:18.500px;box-sizing:border-box;border:1px solid #d8dadd;border-radius:2px;background:#f6f6f6;"></div>
<span class="t" style="left:432.80px;top:703.80px;font-size:9.5px;letter-spacing:0.058px;color:#3c3c3c;">Googlebot Smartphone</span>
<svg style="left:617.500px;top:708.500px" width="5.500" height="3.800" viewBox="0 0 5.500 3.800"><path d="M0 0h5.500L2.750 3.800z" fill="#666"/></svg>
<div style="position:absolute;left:427px;top:725.500px;width:733px;height:20.500px;box-sizing:border-box;border:1px solid #ececec;"></div>
<span class="t" style="left:432.00px;top:729.60px;font-size:9.5px;letter-spacing:-0.048px;color:#3c3c3c;">Mozilla/5.0 (Linux; Android 6.0.1; Nexus 5X Build/MMB29P) AppleWebKit/537.36 (KHTML, like Gecko) Chrome/107.0.0.0 Mobile Safari/537.36 (compatible; Googlebot/2.1; +</span>
<svg style="left:433.300px;top:761.800px" width="3.500" height="5" viewBox="0 0 3.500 5"><path d="M0 0v5L3.500 2.500z" fill="#444"/></svg>
<span class="t" style="left:443.40px;top:757.50px;font-size:9.5px;letter-spacing:-0.082px;color:#222;font-weight:700;">User agent client hints</span>
<svg style="left:548.600px;top:760px" width="8.600" height="8.600" viewBox="0 0 8.600 8.600"><circle cx="4.300" cy="4.300" r="4.300" fill="#333"/><rect x="3.800" y="3.700" width="1" height="2.800" fill="#fff"/><rect x="3.800" y="2" width="1" height="1" fill="#fff"/></svg>
</div>
</body></html>
